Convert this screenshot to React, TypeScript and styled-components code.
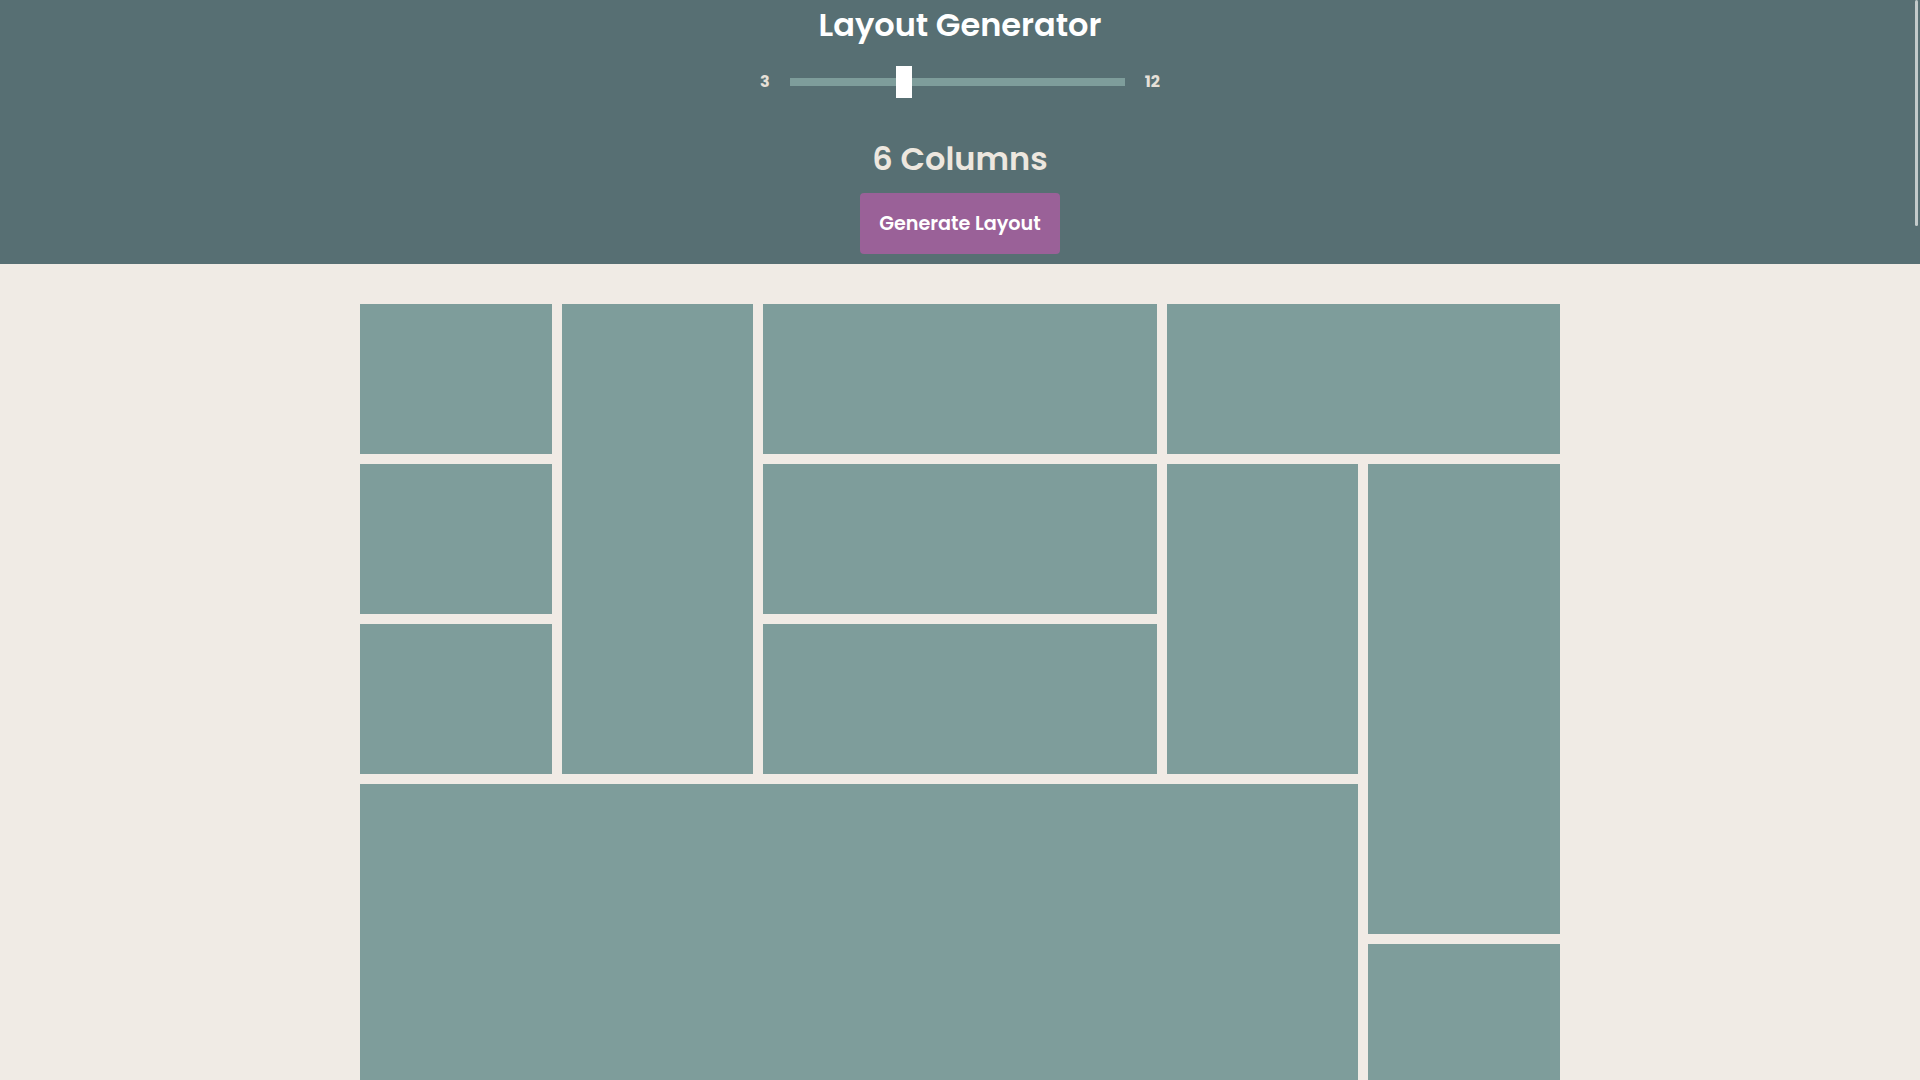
import React, { useState } from "react";
import styled, { createGlobalStyle } from "styled-components";

const Global = createGlobalStyle`
  html, body { margin: 0; padding: 0; }
  body {
    background: #f0ebe5;
    font-family: "Poppins", "Inter", "Noto Sans", sans-serif;
  }
`;

const Header = styled.header`
  background: #576f73;
  display: flex;
  flex-direction: column;
  align-items: center;
  padding: 1px 0 10px;
  height: 264px;
  box-sizing: border-box;
`;

const Title = styled.h1`
  margin: 0;
  font-size: 32px;
  line-height: 48px;
  font-weight: 600;
  color: #ffffff;
`;

const SliderRow = styled.div`
  margin-top: 17px;
  display: flex;
  align-items: center;
  gap: 20px;
  height: 32px;
`;

const RangeLabel = styled.span`
  font-size: 16px;
  font-weight: 700;
  color: #e6e0d8;
  line-height: 30px;
`;

const Track = styled.div`
  position: relative;
  width: 335px;
  height: 8px;
  background: #7e9d9b;
`;

const Thumb = styled.div`
  position: absolute;
  top: -12px;
  width: 16px;
  height: 32px;
  background: #ffffff;
  transform: translateX(-8px);
`;

const Count = styled.h2`
  margin: 37px 0 0;
  font-size: 32px;
  line-height: 48px;
  font-weight: 600;
  color: #ede7df;
`;

const Button = styled.button`
  margin-top: 10px;
  width: 200px;
  height: 61px;
  border: none;
  border-radius: 4px;
  background: #9a6198;
  color: #ffffff;
  font-family: inherit;
  font-size: 19.2px;
  font-weight: 600;
  cursor: pointer;
`;

const Grid = styled.main`
  width: 1200px;
  margin: 40px auto 40px;
  display: grid;
  grid-template-columns: repeat(6, 1fr);
  grid-auto-rows: 150px;
  gap: 10px;
`;

const Tile = styled.div<{ $c: number; $r: number; $cs: number; $rs: number }>`
  background: #7e9d9b;
  grid-column: ${(p) => p.$c} / span ${(p) => p.$cs};
  grid-row: ${(p) => p.$r} / span ${(p) => p.$rs};
`;

const ScrollThumb = styled.div`
  position: fixed;
  top: 0;
  right: 2px;
  width: 3px;
  height: 226px;
  background: #c3cbcb;
  border-radius: 2px;
`;

const tiles = [
  { c: 1, r: 1, cs: 1, rs: 1 },
  { c: 2, r: 1, cs: 1, rs: 3 },
  { c: 3, r: 1, cs: 2, rs: 1 },
  { c: 5, r: 1, cs: 2, rs: 1 },
  { c: 1, r: 2, cs: 1, rs: 1 },
  { c: 3, r: 2, cs: 2, rs: 1 },
  { c: 5, r: 2, cs: 1, rs: 2 },
  { c: 6, r: 2, cs: 1, rs: 3 },
  { c: 1, r: 3, cs: 1, rs: 1 },
  { c: 3, r: 3, cs: 2, rs: 1 },
  { c: 1, r: 4, cs: 5, rs: 3 },
  { c: 6, r: 5, cs: 1, rs: 2 },
];

export default function App() {
  const [cols] = useState(6);
  const min = 3;
  const max = 12;
  const pct = (cols - min) / (max - min);
  const left = 8 + pct * (335 - 16);
  return (
    <>
      <Global />
      <Header>
        <Title>Layout Generator</Title>
        <SliderRow>
          <RangeLabel>3</RangeLabel>
          <Track>
            <Thumb style={{ left: `${left}px` }} />
          </Track>
          <RangeLabel>12</RangeLabel>
        </SliderRow>
        <Count>{cols} Columns</Count>
        <Button>Generate Layout</Button>
      </Header>
      <Grid>
        {tiles.map((t, i) => (
          <Tile key={i} $c={t.c} $r={t.r} $cs={t.cs} $rs={t.rs} />
        ))}
      </Grid>
      <ScrollThumb />
    </>
  );
}
